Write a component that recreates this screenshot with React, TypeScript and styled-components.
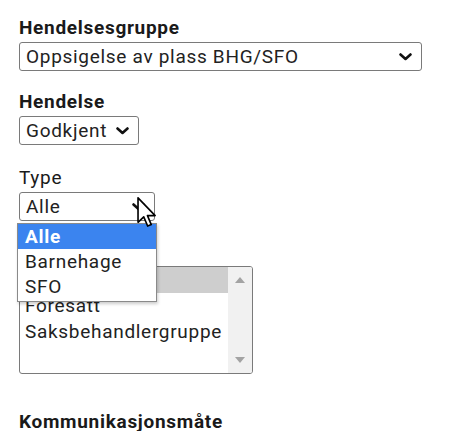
import React from "react";
import styled, { createGlobalStyle } from "styled-components";

const GlobalStyle = createGlobalStyle`
  html, body {
    margin: 0;
    padding: 0;
    background: #ffffff;
  }
  body {
    font-family: Roboto, "Liberation Sans", Arial, sans-serif;
    color: #1f1f1f;
    letter-spacing: 0.7px;
    overflow: hidden;
  }
`;

const Page = styled.div`
  position: relative;
  padding: 18px 0 0 19px;
  width: 475px;
  height: 431px;
  box-sizing: border-box;
`;

const Field = styled.div<{ $gap: number }>`
  display: flex;
  flex-direction: column;
  align-items: flex-start;
  margin-bottom: ${(p) => p.$gap}px;
`;

const Label = styled.div<{ $bold?: boolean }>`
  font-size: 19px;
  line-height: 20px;
  font-weight: ${(p) => (p.$bold ? 700 : 400)};
  color: #1a1a1a;
  margin-bottom: 4px;
  white-space: nowrap;
`;

const SelectBox = styled.div<{ $width: number }>`
  position: relative;
  display: flex;
  align-items: center;
  justify-content: space-between;
  width: ${(p) => p.$width}px;
  height: 29px;
  box-sizing: border-box;
  padding: 0 9px 0 6px;
  border: 1px solid #7a7a7a;
  border-radius: 3px;
  font-size: 19px;
  color: #222;
  background: #fff;
  white-space: nowrap;
`;

const Chevron = () => (
  <svg width="13" height="8" viewBox="0 0 13 8">
    <polyline
      points="1.5,1.5 6.5,6 11.5,1.5"
      fill="none"
      stroke="#111"
      strokeWidth="2.6"
      strokeLinecap="round"
      strokeLinejoin="round"
    />
  </svg>
);

const Dropdown = styled.div`
  position: absolute;
  left: 17px;
  top: 223px;
  width: 140px;
  box-sizing: border-box;
  background: #fff;
  border: 1px solid #8a8a8a;
  box-shadow: 1px 2px 3px rgba(0, 0, 0, 0.2);
  padding-bottom: 2px;
  z-index: 2;
`;

const DropItem = styled.div<{ $active?: boolean }>`
  height: 25px;
  line-height: 25px;
  padding-left: 7px;
  font-size: 19px;
  font-weight: ${(p) => (p.$active ? 700 : 400)};
  color: ${(p) => (p.$active ? "#fff" : "#222")};
  background: ${(p) => (p.$active ? "#3b84ef" : "#fff")};
`;

const ListBox = styled.div`
  display: flex;
  width: 234px;
  height: 108px;
  box-sizing: border-box;
  border: 1px solid #7a7a7a;
  border-radius: 3px;
  overflow: hidden;
`;

const Options = styled.div`
  flex: 1;
  min-width: 0;
`;

const Option = styled.div<{ $selected?: boolean }>`
  height: 26px;
  line-height: 26px;
  padding-left: 5px;
  font-size: 19px;
  color: #222;
  white-space: nowrap;
  background: ${(p) => (p.$selected ? "#cecece" : "transparent")};
`;

const Scrollbar = styled.div`
  width: 24px;
  flex-shrink: 0;
  background: #f1f1f1;
  display: flex;
  flex-direction: column;
  justify-content: space-between;
  align-items: center;
  padding: 10px 0;
  box-sizing: border-box;
`;

const Arrow = ({ up }: { up?: boolean }) => (
  <svg width="10" height="6" viewBox="0 0 10 6">
    <polygon points={up ? "0,6 10,6 5,0" : "0,0 10,0 5,6"} fill="#a3a3a3" />
  </svg>
);

const Cursor = styled.svg`
  position: absolute;
  left: 137px;
  top: 197px;
  z-index: 3;
`;

export default function App() {
  return (
    <>
      <GlobalStyle />
      <Page>
        <Field $gap={21}>
          <Label $bold>Hendelsesgruppe</Label>
          <SelectBox $width={403}>
            <span>Oppsigelse av plass BHG/SFO</span>
            <Chevron />
          </SelectBox>
        </Field>
        <Field $gap={23}>
          <Label $bold>Hendelse</Label>
          <SelectBox $width={120}>
            <span>Godkjent</span>
            <Chevron />
          </SelectBox>
        </Field>
        <Field $gap={21}>
          <Label>Type</Label>
          <SelectBox $width={136}>
            <span>Alle</span>
            <Chevron />
          </SelectBox>
        </Field>
        <Field $gap={38}>
          <Label $bold>Mottaker</Label>
          <ListBox>
            <Options>
              <Option $selected>Elev</Option>
              <Option>Foresatt</Option>
              <Option>Saksbehandlergruppe</Option>
            </Options>
            <Scrollbar>
              <Arrow up />
              <Arrow />
            </Scrollbar>
          </ListBox>
        </Field>
        <Field $gap={0}>
          <Label $bold>Kommunikasjonsmåte</Label>
        </Field>

        <Dropdown>
          <DropItem $active>Alle</DropItem>
          <DropItem>Barnehage</DropItem>
          <DropItem>SFO</DropItem>
        </Dropdown>

        <Cursor width="20" height="31" viewBox="0 0 12 19">
          <path
            d="M0.5,0.5 L0.5,15.5 L4,12.2 L6.4,17.8 L8.6,16.9 L6.3,11.4 L11,11.4 Z"
            fill="#fff"
            stroke="#000"
            strokeWidth="1"
            strokeLinejoin="round"
          />
        </Cursor>
      </Page>
    </>
  );
}
